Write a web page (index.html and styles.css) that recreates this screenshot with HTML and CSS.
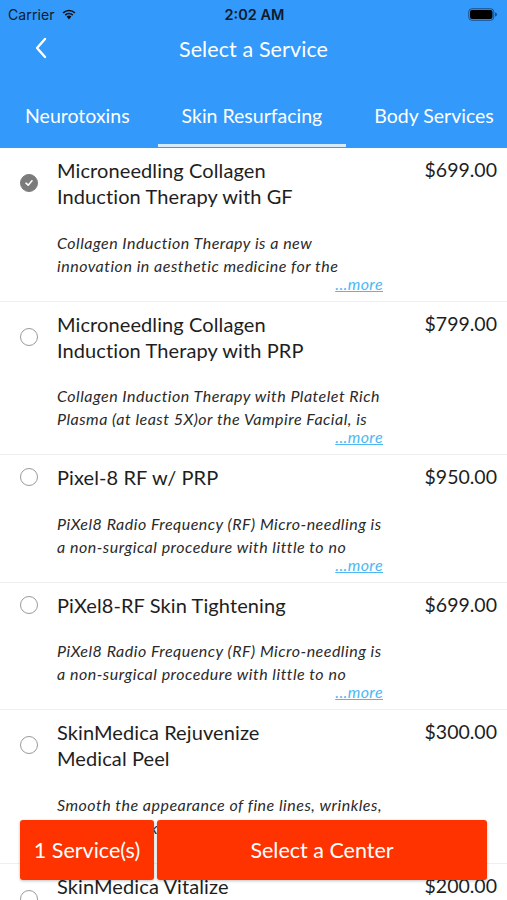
FILE: index.html
```html
<!DOCTYPE html>
<html>
<head>
<meta charset="utf-8">
<link rel="stylesheet" href="styles.css">
</head>
<body>
<div class="screen">
  <header class="header">
    <div class="status">
      <div class="status-left">
        <span class="carrier">Carrier</span>
        <svg class="wifi" width="16" height="12" viewBox="0 0 16 12">
          <path d="M8 11.5 L5.6 8.6 A3.6 3.6 0 0 1 10.4 8.6 Z" fill="#111"/>
          <path d="M3.7 6.5 A6.3 6.3 0 0 1 12.3 6.5 L11.2 7.8 A4.7 4.7 0 0 0 4.8 7.8 Z" fill="#111"/>
          <path d="M1.6 4.2 A9.3 9.3 0 0 1 14.4 4.2 L13.3 5.5 A7.6 7.6 0 0 0 2.7 5.5 Z" fill="#111"/>
        </svg>
      </div>
      <span class="time">2:02 AM</span>
      <div class="status-right">
        <svg width="30" height="13" viewBox="0 0 30 13">
          <rect x="0.75" y="0.75" width="25" height="11.5" rx="3" fill="none" stroke="#1a4f8a" stroke-width="1"/>
          <rect x="2" y="2" width="22.5" height="9" rx="2" fill="#000"/>
          <path d="M27 4.5 a2 2 0 0 1 0 4 z" fill="#1a4f8a"/>
        </svg>
      </div>
    </div>
    <div class="nav">
      <svg class="back" width="14" height="22" viewBox="0 0 14 22">
        <path d="M11 2 L3 11 L11 20" fill="none" stroke="#fff" stroke-width="2.4" stroke-linecap="round" stroke-linejoin="round"/>
      </svg>
      <h1 class="nav-title">Select a Service</h1>
    </div>
    <nav class="tabs">
      <div class="tab">Neurotoxins</div>
      <div class="tab active">Skin Resurfacing</div>
      <div class="tab">Body Services</div>
    </nav>
  </header>

  <main class="list">
    <div class="item">
      <span class="radio checked">
        <svg width="10" height="10" viewBox="0 0 10 10"><path d="M2 5.2 L4.2 7.2 L8 2.8" fill="none" stroke="#fff" stroke-width="1.6" stroke-linecap="round" stroke-linejoin="round"/></svg>
      </span>
      <div class="title">Microneedling Collagen Induction Therapy with GF</div>
      <div class="price">$699.00</div>
      <div class="desc-wrap">
        <p class="desc">Collagen Induction Therapy is a new<br>innovation in aesthetic medicine for the</p>
        <a class="more">...more</a>
      </div>
    </div>

    <div class="item">
      <span class="radio"></span>
      <div class="title">Microneedling Collagen Induction Therapy with PRP</div>
      <div class="price">$799.00</div>
      <div class="desc-wrap">
        <p class="desc">Collagen Induction Therapy with Platelet Rich<br>Plasma (at least 5X)or the Vampire Facial, is</p>
        <a class="more">...more</a>
      </div>
    </div>

    <div class="item">
      <span class="radio"></span>
      <div class="title">Pixel-8 RF w/ PRP</div>
      <div class="price">$950.00</div>
      <div class="desc-wrap">
        <p class="desc">PiXel8 Radio Frequency (RF) Micro-needling is<br>a non-surgical procedure with little to no</p>
        <a class="more">...more</a>
      </div>
    </div>

    <div class="item">
      <span class="radio"></span>
      <div class="title">PiXel8-RF Skin Tightening</div>
      <div class="price">$699.00</div>
      <div class="desc-wrap">
        <p class="desc">PiXel8 Radio Frequency (RF) Micro-needling is<br>a non-surgical procedure with little to no</p>
        <a class="more">...more</a>
      </div>
    </div>

    <div class="item">
      <span class="radio"></span>
      <div class="title">SkinMedica Rejuvenize Medical Peel</div>
      <div class="price">$300.00</div>
      <div class="desc-wrap">
        <p class="desc">Smooth the appearance of fine lines, wrinkles,<br>and uneven skin tone</p>
        <a class="more">...more</a>
      </div>
    </div>

    <div class="item">
      <span class="radio"></span>
      <div class="title">SkinMedica Vitalize<br>Peel</div>
      <div class="price">$200.00</div>
      <div class="desc-wrap">
        <p class="desc">A gentle peel that improves skin tone<br>and texture</p>
        <a class="more">...more</a>
      </div>
    </div>
  </main>

  <div class="actions">
    <button class="btn btn-count">1 Service(s)</button>
    <button class="btn btn-main">Select a Center</button>
  </div>
</div>
</body>
</html>
```

FILE: styles.css
```css
* { box-sizing: border-box; }
html, body { margin: 0; padding: 0; }
body {
  width: 507px;
  height: 900px;
  overflow: hidden;
  background: #fff;
  font-family: "Lato", "Open Sans", sans-serif;
  color: #1d1d1d;
}
.screen {
  position: relative;
  width: 507px;
  height: 900px;
  overflow: hidden;
}
.header {
  background: #3399fb;
  color: #fff;
}
.status {
  height: 28px;
  display: flex;
  align-items: center;
  justify-content: space-between;
  padding: 0 9px 0 8px;
  font-family: "Inter", "Liberation Sans", sans-serif;
  color: #0d1a2a;
  font-size: 14px;
}
.status-left, .status-right {
  width: 110px;
  display: flex;
  align-items: center;
  gap: 6px;
}
.status-right { justify-content: flex-end; }
.carrier { font-weight: 400; letter-spacing: 0.1px; }
.wifi { margin-top: -1px; }
.time { font-weight: 600; font-size: 14.5px; margin-left: 3px; }
.nav {
  height: 42px;
  display: flex;
  align-items: center;
  justify-content: center;
  position: relative;
}
.back {
  position: absolute;
  left: 34px;
  top: 9px;
}
.nav-title {
  margin: 0;
  font-size: 21.5px;
  font-weight: 400;
  letter-spacing: 0.1px;
}
.tabs {
  display: flex;
  gap: 4px;
  padding: 22px 0 1px 1px;
  white-space: nowrap;
  overflow: hidden;
}
.tab {
  flex: none;
  padding: 0 24px 4px;
  line-height: 48px;
  font-size: 19.5px;
  border-bottom: 3px solid transparent;
  color: #fff;
}
.tab.active { border-bottom-color: #d6ebff; }

.item {
  display: grid;
  grid-template-columns: 57px 262px 1fr;
  border-bottom: 1px solid #efefef;
  padding: 9px 10px 10px 0;
}
.radio {
  grid-column: 1;
  grid-row: 1;
  align-self: center;
  justify-self: center;
  margin-left: 1px;
  width: 18px;
  height: 18px;
  border-radius: 50%;
  border: 1.5px solid #9a9a9a;
  display: flex;
  align-items: center;
  justify-content: center;
}
.radio.checked {
  background: #7b7b7b;
  border-color: #7b7b7b;
}
.title {
  grid-column: 2;
  grid-row: 1;
  font-size: 20px;
  line-height: 26px;
  letter-spacing: 0.1px;
  color: #1e1e1e;
}
.price {
  grid-column: 3;
  grid-row: 1;
  text-align: right;
  font-size: 19.5px;
  line-height: 26px;
  color: #1e1e1e;
}
.desc-wrap {
  grid-column: 2 / 4;
  grid-row: 2;
  width: 334px;
  margin-top: 21.5px;
  display: flex;
  flex-direction: column;
}
.desc {
  margin: 0;
  font-size: 16px;
  line-height: 23px;
  height: 46px;
  white-space: nowrap;
  font-style: italic;
  letter-spacing: 0.5px;
  color: #2a2a2a;
}
.more {
  align-self: flex-end;
  margin-right: 8px;
  font-size: 16px;
  line-height: 14px;
  letter-spacing: 0.4px;
  font-style: italic;
  color: #4cb8f5;
  text-decoration: underline;
}
.actions {
  position: absolute;
  left: 20px;
  right: 20px;
  top: 820px;
  height: 60px;
  display: flex;
  gap: 3px;
}
.btn {
  border: none;
  background: #ff3300;
  color: #fff;
  font-family: "Lato", "Open Sans", sans-serif;
  font-size: 21.5px;
  border-radius: 3px;
  box-shadow: 0 1px 3px rgba(0,0,0,0.25);
  padding: 0;
}
.btn-count { width: 134px; }
.btn-main { flex: 1; }
```
